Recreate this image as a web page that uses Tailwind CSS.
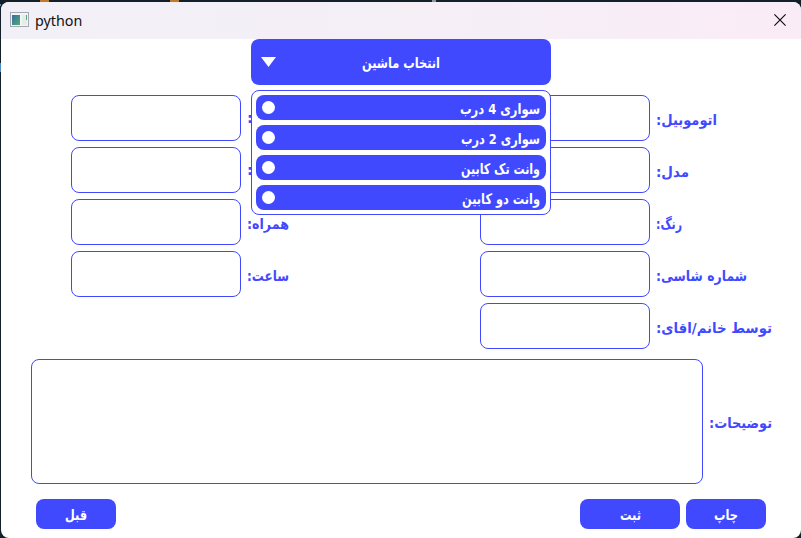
<!DOCTYPE html>
<html lang="fa">
<head>
<meta charset="utf-8">
<title>python</title>
<script src="https://cdn.jsdelivr.net/npm/@tailwindcss/browser@4"></script>
</head>
<body class="relative h-[538px] w-[801px] overflow-hidden bg-[#13202a] pt-[2px] pl-px">
<div class="absolute top-0 left-[40px] h-[2px] w-[9px] bg-[#c07a2c]"></div>
<div class="absolute top-0 left-[170px] h-[2px] w-[9px] bg-[#c07a2c]"></div>
<div class="absolute top-0 left-[432px] h-[2px] w-[4px] bg-[#8d9499]"></div>
<div class="absolute top-[4px] left-0 h-[2px] w-px bg-[#4d8dc4]"></div>
<div class="absolute top-[63px] left-0 h-[9px] w-px bg-[#4d8dc4]"></div>
<div class="relative flex h-[536px] w-[800px] flex-col overflow-hidden rounded-[8px] bg-white font-['DejaVu_Sans',sans-serif] text-[14.5px] font-bold text-[#4149ff]">
  <header class="flex h-[37px] shrink-0 items-center bg-gradient-to-r from-[#f2f0f7] via-[#f5eff6] to-[#faecf6] pr-[15px] pl-[9px] font-['Noto_Sans',sans-serif] font-normal text-[#111]">
    <svg class="mb-px" width="19" height="16" viewBox="0 0 19 16"><defs><linearGradient id="g" x1="0" y1="0" x2="1" y2="1"><stop stop-color="#3d6b9e"/><stop offset="1" stop-color="#4eae73"/></linearGradient></defs><rect x=".5" y=".5" width="18" height="14" fill="#f4f4f4" stroke="#a4a8b3"/><rect x="2" y="3" width="8" height="10" fill="url(#g)"/><rect x="12" y="3" width="5" height="10" fill="#e4eee7"/><path d="M16.5 3v5" stroke="#55a985"/></svg>
    <span class="ml-[6px] text-[14.3px]">python</span>
    <svg class="mb-px ml-auto" width="12" height="12" viewBox="0 0 12 12" fill="none" stroke="#111" stroke-width="1.2"><path d="M.4.4 11.6 11.6M11.6.4.4 11.6"/></svg>
  </header>
  <main class="flex flex-col">
    <div class="relative z-10 ml-[250px] h-[46px] w-[300px]">
      <button class="relative flex h-[46px] w-full items-center justify-center rounded-[8px] bg-[#4149ff] text-white">
        <svg class="absolute top-[18px] left-[10px]" width="15" height="10" viewBox="0 0 15 10"><path d="M0 0h15L7.5 10z" fill="#fff"/></svg>
        <svg width="78" height="24" class="overflow-visible fill-current" direction="rtl"><text x="78" y="18" textLength="78" lengthAdjust="spacingAndGlyphs">انتخاب ماشین</text></svg>
      </button>
      <ul class="absolute top-[51px] left-0 flex h-[125px] w-[300px] flex-col gap-[5px] rounded-[8px] border border-[#4149ff] bg-white p-[4px] text-white">
        <li class="flex h-[25px] items-center justify-between rounded-[8px] bg-[#4149ff] px-[6px]"><i class="size-[13px] rounded-full bg-white"></i><svg width="80" height="25" class="overflow-visible fill-current" direction="rtl"><text x="80" y="19" textLength="80" lengthAdjust="spacingAndGlyphs">سواری 4 درب</text></svg></li>
        <li class="flex h-[25px] items-center justify-between rounded-[8px] bg-[#4149ff] px-[6px]"><i class="size-[13px] rounded-full bg-white"></i><svg width="79" height="25" class="overflow-visible fill-current" direction="rtl"><text x="79" y="19" textLength="79" lengthAdjust="spacingAndGlyphs">سواری 2 درب</text></svg></li>
        <li class="flex h-[25px] items-center justify-between rounded-[8px] bg-[#4149ff] px-[6px]"><i class="size-[13px] rounded-full bg-white"></i><svg width="79" height="25" class="overflow-visible fill-current" direction="rtl"><text x="79" y="19" textLength="79" lengthAdjust="spacingAndGlyphs">وانت تک کابین</text></svg></li>
        <li class="flex h-[25px] items-center justify-between rounded-[8px] bg-[#4149ff] px-[6px]"><i class="size-[13px] rounded-full bg-white"></i><svg width="78" height="25" class="overflow-visible fill-current" direction="rtl"><text x="78" y="19" textLength="78" lengthAdjust="spacingAndGlyphs">وانت دو کابین</text></svg></li>
      </ul>
    </div>
    <div class="mt-[10px] flex pl-[70px]">
      <div class="flex w-[409px] flex-col gap-[6px]">
        <div class="flex h-[46px] items-center gap-[6px]"><div class="h-full w-[170px] rounded-[8px] border border-[#4149ff]"></div><span class="pt-[2px]">:</span></div>
        <div class="flex h-[46px] items-center gap-[6px]"><div class="h-full w-[170px] rounded-[8px] border border-[#4149ff]"></div><span class="pt-[2px]">:</span></div>
        <div class="flex h-[46px] items-center gap-[6px]"><div class="h-full w-[170px] rounded-[8px] border border-[#4149ff]"></div><svg width="42" height="24" class="overflow-visible fill-current" direction="rtl"><text x="42" y="19" textLength="42" lengthAdjust="spacingAndGlyphs">همراه:</text></svg></div>
        <div class="flex h-[46px] items-center gap-[6px]"><div class="h-full w-[170px] rounded-[8px] border border-[#4149ff]"></div><svg width="42" height="24" class="overflow-visible fill-current" direction="rtl"><text x="42" y="19" textLength="42" lengthAdjust="spacingAndGlyphs">ساعت:</text></svg></div>
      </div>
      <div class="flex flex-col gap-[6px]">
        <div class="flex h-[46px] items-center gap-[6px]"><div class="h-full w-[170px] rounded-[8px] border border-[#4149ff]"></div><svg width="61" height="24" class="overflow-visible fill-current" direction="rtl"><text x="61" y="19" textLength="61" lengthAdjust="spacingAndGlyphs">اتوموبیل:</text></svg></div>
        <div class="flex h-[46px] items-center gap-[6px]"><div class="h-full w-[170px] rounded-[8px] border border-[#4149ff]"></div><svg width="33" height="24" class="overflow-visible fill-current" direction="rtl"><text x="33" y="19" textLength="33" lengthAdjust="spacingAndGlyphs">مدل:</text></svg></div>
        <div class="flex h-[46px] items-center gap-[6px]"><div class="h-full w-[170px] rounded-[8px] border border-[#4149ff]"></div><svg width="26" height="24" class="overflow-visible fill-current" direction="rtl"><text x="26" y="19" textLength="26" lengthAdjust="spacingAndGlyphs">رنگ:</text></svg></div>
        <div class="flex h-[46px] items-center gap-[6px]"><div class="h-full w-[170px] rounded-[8px] border border-[#4149ff]"></div><svg width="91" height="24" class="overflow-visible fill-current" direction="rtl"><text x="91" y="19" textLength="91" lengthAdjust="spacingAndGlyphs">شماره شاسی:</text></svg></div>
        <div class="flex h-[46px] items-center gap-[6px]"><div class="h-full w-[170px] rounded-[8px] border border-[#4149ff]"></div><svg width="116" height="24" class="overflow-visible fill-current" direction="rtl"><text x="116" y="19" textLength="116" lengthAdjust="spacingAndGlyphs">توسط خانم/اقای:</text></svg></div>
      </div>
    </div>
    <div class="mt-[10px] flex h-[125px] items-center gap-[6px] pl-[30px]"><div class="h-full w-[672px] rounded-[8px] border border-[#4149ff]"></div><svg width="63" height="25" class="overflow-visible fill-current" direction="rtl"><text x="63" y="19" textLength="63" lengthAdjust="spacingAndGlyphs">توضیحات:</text></svg></div>
    <footer class="mt-[15px] flex h-[30px] gap-[6px] px-[35px] text-white">
      <button class="mr-auto flex w-[80px] items-center justify-center rounded-[8px] bg-[#4149ff]"><svg width="22" height="24" class="overflow-visible fill-current" direction="rtl"><text x="22" y="18" textLength="22" lengthAdjust="spacingAndGlyphs">قبل</text></svg></button>
      <button class="flex w-[100px] items-center justify-center rounded-[8px] bg-[#4149ff]"><svg width="21" height="24" class="overflow-visible fill-current" direction="rtl"><text x="21" y="18" textLength="21" lengthAdjust="spacingAndGlyphs">ثبت</text></svg></button>
      <button class="flex w-[80px] items-center justify-center rounded-[8px] bg-[#4149ff]"><svg width="24" height="24" class="overflow-visible fill-current" direction="rtl"><text x="24" y="18" textLength="24" lengthAdjust="spacingAndGlyphs">چاپ</text></svg></button>
    </footer>
  </main>
</div>
</body>
</html>
